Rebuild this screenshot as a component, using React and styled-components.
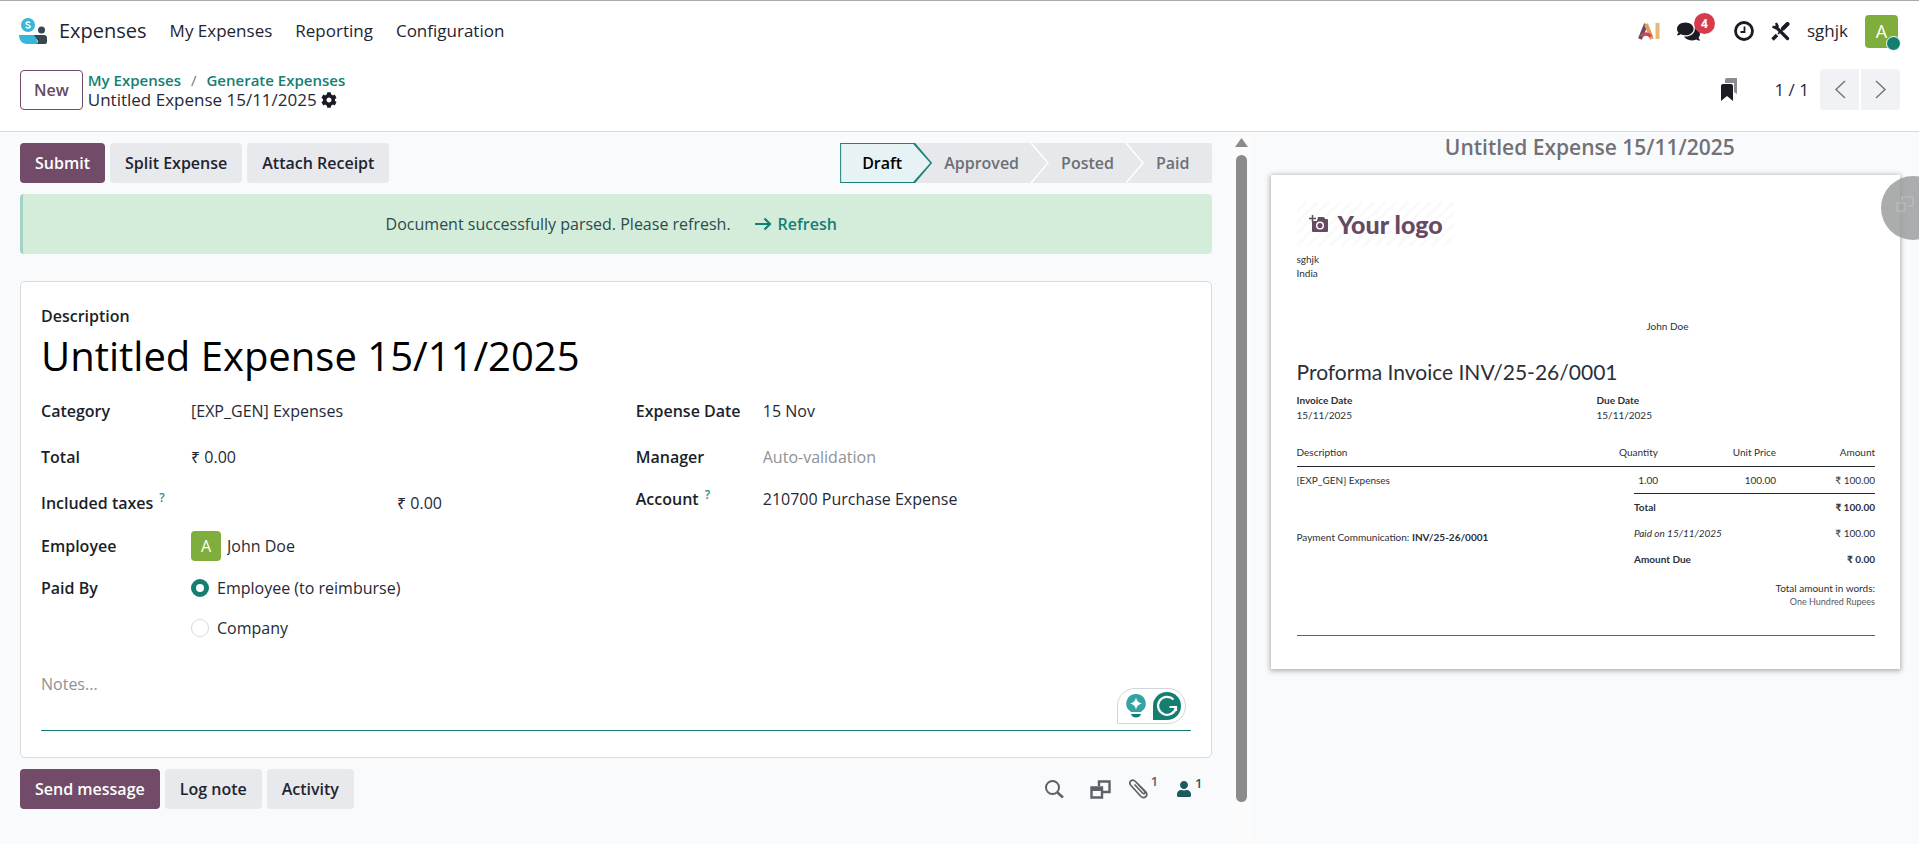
import styled, { createGlobalStyle, css } from "styled-components";
import { FaComments, FaCog, FaUser } from "react-icons/fa";

const GlobalStyle = createGlobalStyle`
  * {
    box-sizing: border-box;
  }
  body {
    margin: 0;
    background: #f9fafc;
    color: #1f2937;
    font-family: "Open Sans", "Noto Sans", sans-serif;
    font-size: 17px;
    line-height: 24px;
    overflow: hidden;
  }
  button, input, textarea {
    font: inherit;
    color: inherit;
  }
`;

const Page = styled.div`
  min-height: 100vh;
  display: flex;
  flex-direction: column;
`;

const Header = styled.header`
  background: #fff;
  border-top: 1px solid #ababab;
  border-bottom: 1px solid #d8dadd;
`;

const Navbar = styled.nav`
  height: 60px;
  padding: 0 21px 0 19px;
  display: flex;
  align-items: center;
  justify-content: space-between;
`;

const NavGroup = styled.div`
  display: flex;
  align-items: center;
  gap: ${(props) => props.$gap}px;
`;

const Brand = styled.a`
  display: flex;
  align-items: center;
  gap: 12px;
  font-size: 20px;
  color: #1f2430;
  text-decoration: none;
`;

const NavLink = styled.a`
  font-size: 17px;
  color: #1f2430;
  text-decoration: none;
`;

const IconButton = styled.button`
  display: flex;
  align-items: center;
  gap: 3px;
  position: relative;
  padding: 0;
  border: 0;
  background: none;
  color: ${(props) => props.$color || "#1b1b26"};
  font-size: 24px;
`;

const CountBadge = styled.span`
  position: absolute;
  left: 17px;
  top: -7px;
  width: 21px;
  height: 21px;
  border-radius: 50%;
  background: #d73b4b;
  color: #fff;
  font-size: 12px;
  font-weight: 700;
  line-height: 21px;
  text-align: center;
`;

const Avatar = styled.span`
  flex: none;
  display: flex;
  align-items: center;
  justify-content: center;
  position: relative;
  width: ${(props) => props.$size}px;
  height: ${(props) => props.$size}px;
  border-radius: 4px;
  background: #7fae3c;
  color: #fff;
  font-size: ${(props) => (props.$size > 30 ? 18 : 16)}px;
`;

const PresenceDot = styled.span`
  position: absolute;
  right: -3px;
  bottom: -3px;
  width: 15px;
  height: 15px;
  border-radius: 50%;
  border: 1px solid #fff;
  background: #147f70;
`;

const ControlPanel = styled.div`
  height: 70px;
  padding: 8px 19px 21px 20px;
  display: flex;
  align-items: center;
  justify-content: space-between;
`;

const Breadcrumb = styled.div`
  display: flex;
  align-items: center;
  gap: 5px;
`;

const NewButton = styled.button`
  height: 40px;
  padding: 0 13px;
  border: 1px solid #714b67;
  border-radius: 4px;
  background: #fff;
  color: #66495f;
  font-size: 16px;
  font-weight: 600;
`;

const Trail = styled.div`
  font-size: 15px;
  font-weight: 600;
  line-height: 20px;
  color: #777;
`;

const TrailLink = styled.a`
  color: #147f73;
  text-decoration: none;
`;

const TrailSlash = styled.span`
  font-weight: 400;
  padding: 0 10px;
`;

const Current = styled.div`
  display: flex;
  align-items: center;
  gap: 4px;
  font-size: 17px;
  line-height: 20px;
`;

const Pager = styled.div`
  display: flex;
  align-items: center;
  font-size: 17px;
`;

const PagerCount = styled.span`
  margin: 0 9px 0 37px;
`;

const PagerButton = styled.button`
  width: 39px;
  height: 41px;
  margin-left: 2px;
  padding: 0;
  display: flex;
  align-items: center;
  justify-content: center;
  border: 0;
  border-radius: ${(props) => (props.$end ? "0 4px 4px 0" : "4px 0 0 4px")};
  background: #f1f2f6;
  color: #777;
`;

const Content = styled.div`
  flex: 1;
  display: grid;
  grid-template-columns: minmax(0, 15fr) minmax(0, 8fr);
`;

const FormArea = styled.div`
  display: flex;
`;

const FormColumn = styled.main`
  flex: 1;
  min-width: 0;
  padding: 11px 20px 16px;
`;

const Track = styled.div`
  width: 20px;
  padding-top: 6px;
  display: flex;
  flex-direction: column;
  align-items: center;
  gap: 8px;
  background: #fbfbfc;
`;

const Thumb = styled.div`
  width: 11px;
  height: 647px;
  border-radius: 6px;
  background: #8b8b8b;
`;

const Bar = styled.div`
  display: flex;
  align-items: center;
  justify-content: space-between;
`;

const Buttons = styled.div`
  display: flex;
  gap: 5px;
`;

const Button = styled.button`
  height: 40px;
  padding: 0 15px;
  border: 0;
  border-radius: 4px;
  background: ${(props) => (props.$primary ? "#714b67" : "#e7e9ed")};
  color: ${(props) => (props.$primary ? "#fff" : "#1f2430")};
  font-size: 16px;
  font-weight: 600;
`;

const Steps = styled.div`
  display: flex;
  height: 40px;
  border-radius: 2px;
  background: #e7e8ec;
`;

const arrowShape = css`
  clip-path: polygon(0 0, calc(100% - 17px) 0, 100% 50%, calc(100% - 17px) 100%, 0 100%);
`;

const Step = styled.button`
  position: relative;
  z-index: 0;
  padding: 0 ${(props) => (props.$last ? 22 : 30)}px 0 ${(props) => (props.$active ? 22 : 12)}px;
  border: 0;
  background: none;
  color: #6d6f76;
  font-size: 16px;
  font-weight: 600;
  ${(props) =>
    props.$active &&
    css`
      color: #000;
      background: #1d8278;
      ${arrowShape}
      &::before {
        content: "";
        position: absolute;
        z-index: -1;
        inset: 1px 2px 1px 1px;
        background: #e6f2f4;
        ${arrowShape}
      }
    `}
`;

const StepChevron = styled.svg`
  position: absolute;
  right: 0;
  top: 0;
`;

const Alert = styled.div`
  display: flex;
  align-items: center;
  justify-content: center;
  gap: 24px;
  height: 60px;
  margin-top: 11px;
  padding-right: 12px;
  border-left: 3px solid #a3d4c4;
  border-radius: 4px;
  background: #d4edda;
  color: #2d4a4c;
  font-size: 16px;
`;

const RefreshButton = styled.button`
  display: flex;
  align-items: center;
  gap: 6px;
  padding: 0;
  border: 0;
  background: none;
  color: #147f78;
  font-weight: 600;
`;

const Sheet = styled.section`
  margin: 27px 0 11px;
  padding: 22px 20px 26px;
  border: 1px solid #d8dadd;
  border-radius: 5px;
  background: #fff;
`;

const Label = styled.label`
  color: #1b1f2b;
  font-size: 16px;
  font-weight: 600;
`;

const TitleInput = styled.input`
  display: block;
  width: 100%;
  height: 54px;
  padding: 0;
  border: 0;
  outline: 0;
  background: none;
  color: #000;
  font-size: 40px;
`;

const Columns = styled.div`
  display: grid;
  grid-template-columns: minmax(0, 1fr) minmax(0, 1fr);
  gap: 40px;
  padding-top: 6px;
`;

const Fields = styled.div`
  display: grid;
  grid-template-columns: ${(props) => props.$label}px minmax(0, 1fr);
  grid-template-rows: ${(props) => props.$rows};
  align-items: center;
`;

const FieldInput = styled.input`
  width: 100%;
  padding: 0;
  border: 0;
  outline: 0;
  background: none;
  font-size: 16px;
  &::placeholder {
    color: #8f9195;
    opacity: 1;
  }
`;

const TaxAmount = styled.output`
  padding-left: 206px;
  font-size: 16px;
`;

const Person = styled.div`
  display: flex;
  align-items: center;
  gap: 6px;
`;

const Help = styled.sup`
  margin-left: 6px;
  color: #2a8f95;
  font-size: 12px;
  font-weight: 600;
  line-height: 12px;
`;

const RadioRow = styled.label`
  grid-column: 2;
  display: flex;
  align-items: center;
  gap: 8px;
  font-size: 16px;
`;

const Radio = styled.input`
  appearance: none;
  width: 18px;
  height: 18px;
  margin: 0;
  border: 1px solid #d8dadd;
  border-radius: 50%;
  background: #fff;
  &:checked {
    border: 5px solid #147f70;
  }
`;

const NotesBox = styled.div`
  position: relative;
  margin-top: 23px;
`;

const Notes = styled.textarea`
  display: block;
  width: 100%;
  height: 61px;
  padding: 2px 0;
  resize: none;
  border: 0;
  border-bottom: 1px solid #147f78;
  outline: 0;
  background: none;
  font-size: 16px;
  &::placeholder {
    color: #8f9195;
    opacity: 1;
  }
`;

const Assistant = styled.div`
  position: absolute;
  right: 5px;
  bottom: 7px;
  display: flex;
  align-items: center;
  gap: 7px;
  height: 36px;
  padding: 0 4px 0 8px;
  border: 1px solid #d3d5dc;
  border-radius: 18px 18px 18px 0;
  background: #fff;
`;

const ChatterTools = styled.div`
  display: flex;
  align-items: center;
  gap: 18px;
  padding-right: 9px;
`;

const SearchButton = styled(IconButton)`
  padding-right: 8px;
`;

const Count = styled.span`
  align-self: flex-start;
  margin-top: -4px;
  font-size: 13px;
  font-weight: 600;
  line-height: 12px;
`;

const Preview = styled.aside`
  padding: 1px 19px 0;
`;

const PreviewTitle = styled.h2`
  margin: 0 0 14px;
  padding-left: 9px;
  color: #717176;
  font-size: 21px;
  font-weight: 600;
  line-height: 28px;
  text-align: center;
`;

const Paper = styled.article`
  padding: 27px 25px 33px 26px;
  background: #fff;
  box-shadow: 0 1px 5px 1px rgba(0, 0, 0, 0.3);
  color: #2b2f38;
  font-family: Lato, "Open Sans", sans-serif;
  font-size: 10px;
  line-height: 14px;
`;

const LogoBox = styled.div`
  display: flex;
  align-items: center;
  gap: 9px;
  width: 157px;
  height: 44px;
  margin-bottom: 6px;
  padding-left: 12px;
  background: repeating-linear-gradient(135deg, #fff 0 5px, #fbfafb 5px 8px);
  color: #664a61;
  font-size: 25px;
  font-weight: 900;
  white-space: nowrap;
`;

const Recipient = styled.div`
  padding: 39px 0 25px 60.5%;
`;

const InvoiceTitle = styled.h3`
  margin: 0;
  font-size: 21px;
  font-weight: 400;
  line-height: 28px;
`;

const Dates = styled.dl`
  display: grid;
  grid-template-columns: 300px 1fr;
  margin: 7px 0 17px;
  dt {
    font-weight: 700;
  }
  dd {
    margin: 1px 0 0;
  }
`;

const Lines = styled.table`
  width: 100%;
  border-collapse: collapse;
  th, td {
    height: 27px;
    padding: 0;
    text-align: right;
    font-weight: 400;
  }
  th:first-child, td:first-child {
    text-align: left;
  }
  thead tr {
    border-bottom: 1px solid #23272f;
  }
`;

const Summary = styled.div`
  display: flex;
  justify-content: space-between;
  padding-bottom: 9px;
`;

const Communication = styled.p`
  margin: 37px 0 0;
`;

const Totals = styled.table`
  width: 241px;
  border-collapse: collapse;
  border-top: 1px solid #23272f;
  th, td {
    height: 26px;
    padding: 0;
    font-weight: 400;
  }
  th {
    text-align: left;
  }
  td {
    text-align: right;
  }
`;

const TotalRow = styled.tr`
  && > * {
    font-weight: ${(props) => (props.$bold ? 700 : 400)};
  }
  th {
    font-style: ${(props) => (props.$italic ? "italic" : "normal")};
  }
`;

const Words = styled.p`
  margin: 0;
  padding-bottom: 26px;
  border-bottom: 1px solid #5f6268;
  text-align: right;
  small {
    display: block;
    color: #555961;
    font-size: 9px;
  }
`;

const FloatingHandle = styled.button`
  position: fixed;
  right: -26px;
  top: 176px;
  width: 64px;
  height: 64px;
  padding: 0 16px 0 0;
  border: 0;
  border-radius: 50%;
  background: rgba(150, 152, 152, 0.8);
  color: #bdbfc1;
`;

const ExpensesLogo = () => (
  <svg width="28" height="26" viewBox="0 0 28 26" aria-hidden="true">
    <circle cx="9" cy="7" r="7" fill="#36b7d7" />
    <path d="M11 5C10.500 3.700 7 3.600 7 5.400C7 7.300 11.200 6.400 11.200 8.500C11.200 10.400 7.300 10.300 6.800 8.800" fill="none" stroke="#fff" strokeWidth="1.500" />
    <circle cx="22.500" cy="12" r="3.500" fill="#37474f" />
    <path d="M0 17h16l3 9H8C3 26 0 22 0 17z" fill="#36b7d7" />
    <path d="M15 17h10q3 0 3 3v4q0 2-2 2h-8c1.500-2 1-3.500-.5-5z" fill="#37474f" />
  </svg>
);

const AiIcon = () => (
  <svg width="22" height="18" viewBox="0 0 22 18" aria-hidden="true">
    <path d="M2 17L8 2" stroke="#6a4660" strokeWidth="4" />
    <path d="M8 2l6 15" stroke="#e0a15f" strokeWidth="4" />
    <path d="M3 14.500q5-5 10 0" fill="none" stroke="#cf4457" strokeWidth="3.500" />
    <path d="M19.500 1v16" stroke="#e8b878" strokeWidth="4" />
  </svg>
);

const ClockIcon = () => (
  <svg width="20" height="20" viewBox="0 0 20 20" fill="none" stroke="currentColor" aria-hidden="true">
    <circle cx="10" cy="10" r="8.500" strokeWidth="2.800" />
    <path d="M10.500 5.500v5.500H6.500" strokeWidth="1.800" />
  </svg>
);

const ToolsIcon = () => (
  <svg width="19" height="19" viewBox="0 0 19 19" fill="none" stroke="currentColor" aria-hidden="true">
    <path d="M5 5l11.500 11.500" strokeWidth="3.200" strokeLinecap="round" />
    <path d="M1.500 4.500l3 1.500 2-2-1.500-3" strokeWidth="2.400" />
    <path d="M16.500 2l-4.500 4.500" strokeWidth="4" strokeLinecap="round" />
    <path d="M11.500 7.500L7 12" strokeWidth="1.600" />
    <path d="M6 13l-4.500 4.500" strokeWidth="3.600" />
  </svg>
);

const BookmarksIcon = () => (
  <svg width="16" height="23" viewBox="0 0 16 23" aria-hidden="true">
    <path d="M6 0h10v16l-3-2V5H4V2q0-2 2-2z" fill="#8c8c90" />
    <path d="M0 8q0-2 2-2h8q2 0 2 2v15l-6-5-6 5z" fill="#1b1b26" />
  </svg>
);

const Chevron = ({ d }) => (
  <svg width="12" height="19" viewBox="0 0 12 19" fill="none" stroke="currentColor" strokeWidth="1.500" aria-hidden="true">
    <path d={d} />
  </svg>
);

const ArrowRight = () => (
  <svg width="17" height="14" viewBox="0 0 17 14" fill="none" stroke="currentColor" strokeWidth="2.200" aria-hidden="true">
    <path d="M0 7h15M9.500 1.500L15 7l-5.500 5.500" />
  </svg>
);

const CameraIcon = () => (
  <svg width="20" height="18" viewBox="0 0 20 18" aria-hidden="true">
    <path d="M3 6v10q0 1 1 1h14q1 0 1-1V5q0-1-1-1h-2l-1-2H9L8 6z" fill="#664a61" />
    <circle cx="11" cy="10.500" r="3.300" fill="#664a61" stroke="#fff" strokeWidth="1.500" />
    <path d="M0 3.500h7M3.500 0v7" stroke="#664a61" strokeWidth="1.500" />
  </svg>
);

const BulbIcon = () => (
  <svg width="20" height="24" viewBox="0 0 20 24" aria-hidden="true">
    <path d="M10 0a9.500 9.500 0 0 1 6 17l-1 1H5l-1-1A9.500 9.500 0 0 1 10 0z" fill="#33a3a6" />
    <path d="M5 20h10q-1 3.500-5 3.500T5 20z" fill="#147f78" />
    <path d="M10 3.500q1 5 6 6-5 1-6 6-1-5-6-6 5-1 6-6z" fill="#fff" />
  </svg>
);

const GrammarIcon = () => (
  <svg width="28" height="28" viewBox="0 0 28 28" aria-hidden="true">
    <path d="M14 0a14 14 0 0 1 0 28H0V14A14 14 0 0 1 14 0z" fill="#147f70" />
    <path d="M20.500 7.500A9 9 0 1 0 23 15h-6.500M23 14.500V19" fill="none" stroke="#fff" strokeWidth="2.200" />
  </svg>
);

const SearchIcon = () => (
  <svg width="19" height="19" viewBox="0 0 19 19" fill="none" stroke="currentColor" strokeWidth="2" aria-hidden="true">
    <circle cx="7.500" cy="7.500" r="6.500" />
    <path d="M12.500 12.500l5.500 5" strokeWidth="2.400" />
  </svg>
);

const WindowsIcon = () => (
  <svg width="21" height="19" viewBox="0 0 21 19" fill="none" stroke="currentColor" strokeWidth="2.400" aria-hidden="true">
    <path d="M9 6V1.500h10.500V12H13" />
    <path d="M1.500 7.500h10.500v10H1.500z" />
    <path d="M1 9h11" strokeWidth="4" />
  </svg>
);

const ClipIcon = () => (
  <svg width="19" height="20" viewBox="0 0 19 20" fill="none" stroke="currentColor" strokeWidth="1.700" strokeLinecap="round" aria-hidden="true">
    <path d="M6 6l7.500 8c1.500 1.600 3.400-.1 2-1.700L6.500 2.500C3-.8-1 3 2 6.500l9.500 10.500c3.500 4 8.500-.5 5-4.500L9 5" />
  </svg>
);

const links = ["My Expenses", "Reporting", "Configuration"];

const totals = [
  { label: "Total", value: "₹ 100.00", bold: true },
  { label: "Paid on 15/11/2025", value: "₹ 100.00", italic: true },
  { label: "Amount Due", value: "₹ 0.00", bold: true },
];

const App = () => {
  return (
    <Page>
      <GlobalStyle />
      <Header>
        <Navbar>
          <NavGroup $gap={23}>
            <Brand href="#expenses">
              <ExpensesLogo />
              Expenses
            </Brand>
            {links.map((link) => (
              <NavLink key={link} href="#menu">
                {link}
              </NavLink>
            ))}
          </NavGroup>
          <NavGroup $gap={17}>
            <IconButton aria-label="AI">
              <AiIcon />
            </IconButton>
            <IconButton aria-label="Messages">
              <FaComments size={23} />
              <CountBadge>4</CountBadge>
            </IconButton>
            <span />
            <IconButton aria-label="Activities">
              <ClockIcon />
            </IconButton>
            <IconButton aria-label="Tools">
              <ToolsIcon />
            </IconButton>
            <NavLink href="#company">sghjk</NavLink>
            <Avatar $size={33}>
              A
              <PresenceDot />
            </Avatar>
          </NavGroup>
        </Navbar>
        <ControlPanel>
          <Breadcrumb>
            <NewButton>New</NewButton>
            <div>
              <Trail>
                <TrailLink href="#my">My Expenses</TrailLink>
                <TrailSlash>/</TrailSlash>
                <TrailLink href="#generate">Generate Expenses</TrailLink>
              </Trail>
              <Current>
                Untitled Expense 15/11/2025
                <IconButton aria-label="Actions">
                  <FaCog size={16} />
                </IconButton>
              </Current>
            </div>
          </Breadcrumb>
          <Pager>
            <IconButton aria-label="Bookmarks">
              <BookmarksIcon />
            </IconButton>
            <PagerCount>1 / 1</PagerCount>
            <PagerButton aria-label="Previous">
              <Chevron d="M11 1L2 9.500l9 8.500" />
            </PagerButton>
            <PagerButton $end aria-label="Next">
              <Chevron d="M1 1l9 8.500L1 18" />
            </PagerButton>
          </Pager>
        </ControlPanel>
      </Header>

      <Content>
        <FormArea>
          <FormColumn>
            <Bar>
              <Buttons>
                <Button $primary>Submit</Button>
                <Button>Split Expense</Button>
                <Button>Attach Receipt</Button>
              </Buttons>
              <Steps>
                <Step $active>Draft</Step>
                {["Approved", "Posted"].map((step) => (
                  <Step key={step}>
                    {step}
                    <StepChevron width="18" height="40" viewBox="0 0 18 40" fill="none" stroke="#fff" strokeWidth="1.500">
                      <path d="M0 0l17 20L0 40" />
                    </StepChevron>
                  </Step>
                ))}
                <Step $last>Paid</Step>
              </Steps>
            </Bar>

            <Alert role="status">
              Document successfully parsed. Please refresh.
              <RefreshButton>
                <ArrowRight />
                Refresh
              </RefreshButton>
            </Alert>

            <Sheet>
              <Label htmlFor="description">Description</Label>
              <TitleInput id="description" defaultValue="Untitled Expense 15/11/2025" />
              <Columns>
                <Fields $label={150} $rows="46px 46px 45px 42px 41px 39px">
                  <Label htmlFor="category">Category</Label>
                  <FieldInput id="category" defaultValue="[EXP_GEN] Expenses" />
                  <Label htmlFor="total">Total</Label>
                  <FieldInput id="total" defaultValue="₹ 0.00" />
                  <Label htmlFor="taxes">
                    Included taxes
                    <Help>?</Help>
                  </Label>
                  <TaxAmount id="taxes">₹ 0.00</TaxAmount>
                  <Label htmlFor="employee">Employee</Label>
                  <Person>
                    <Avatar $size={30}>A</Avatar>
                    <FieldInput id="employee" defaultValue="John Doe" />
                  </Person>
                  <Label as="span">Paid By</Label>
                  <RadioRow>
                    <Radio type="radio" name="paidBy" defaultChecked />
                    Employee (to reimburse)
                  </RadioRow>
                  <RadioRow>
                    <Radio type="radio" name="paidBy" />
                    Company
                  </RadioRow>
                </Fields>
                <Fields $label={127} $rows="46px 46px 38px">
                  <Label htmlFor="date">Expense Date</Label>
                  <FieldInput id="date" defaultValue="15 Nov" />
                  <Label htmlFor="manager">Manager</Label>
                  <FieldInput id="manager" placeholder="Auto-validation" />
                  <Label htmlFor="account">
                    Account
                    <Help>?</Help>
                  </Label>
                  <FieldInput id="account" defaultValue="210700 Purchase Expense" />
                </Fields>
              </Columns>
              <NotesBox>
                <Notes aria-label="Notes" placeholder="Notes..." />
                <Assistant>
                  <BulbIcon />
                  <GrammarIcon />
                </Assistant>
              </NotesBox>
            </Sheet>

            <Bar>
              <Buttons>
                <Button $primary>Send message</Button>
                <Button>Log note</Button>
                <Button>Activity</Button>
              </Buttons>
              <ChatterTools>
                <SearchButton $color="#5f5f68" aria-label="Search">
                  <SearchIcon />
                </SearchButton>
                <IconButton $color="#5f5f68" aria-label="Open in window">
                  <WindowsIcon />
                </IconButton>
                <IconButton $color="#5f5f68" aria-label="Attachments">
                  <ClipIcon />
                  <Count>1</Count>
                </IconButton>
                <IconButton $color="#1d5a60" aria-label="Followers">
                  <FaUser size={16} />
                  <Count>1</Count>
                </IconButton>
              </ChatterTools>
            </Bar>
          </FormColumn>
          <Track>
            <svg width="13" height="9" viewBox="0 0 13 9" aria-hidden="true">
              <path d="M6.500 0L13 9H0z" fill="#8b8b8b" />
            </svg>
            <Thumb />
          </Track>
        </FormArea>

        <Preview>
          <PreviewTitle>Untitled Expense 15/11/2025</PreviewTitle>
          <Paper>
            <LogoBox>
              <CameraIcon />
              Your logo
            </LogoBox>
            <div>sghjk</div>
            <div>India</div>
            <Recipient>John Doe</Recipient>
            <InvoiceTitle>Proforma Invoice INV/25-26/0001</InvoiceTitle>
            <Dates>
              <dt>Invoice Date</dt>
              <dt>Due Date</dt>
              <dd>15/11/2025</dd>
              <dd>15/11/2025</dd>
            </Dates>
            <Lines>
              <colgroup>
                <col />
                <col width="120" />
                <col width="118" />
                <col width="99" />
              </colgroup>
              <thead>
                <tr>
                  <th>Description</th>
                  <th>Quantity</th>
                  <th>Unit Price</th>
                  <th>Amount</th>
                </tr>
              </thead>
              <tbody>
                <tr>
                  <td>[EXP_GEN] Expenses</td>
                  <td>1.00</td>
                  <td>100.00</td>
                  <td>₹ 100.00</td>
                </tr>
              </tbody>
            </Lines>
            <Summary>
              <Communication>
                Payment Communication: <b>INV/25-26/0001</b>
              </Communication>
              <Totals>
                <tbody>
                  {totals.map((row) => (
                    <TotalRow key={row.label} $bold={row.bold} $italic={row.italic}>
                      <th>{row.label}</th>
                      <td>{row.value}</td>
                    </TotalRow>
                  ))}
                </tbody>
              </Totals>
            </Summary>
            <Words>
              Total amount in words:
              <small>One Hundred Rupees</small>
            </Words>
          </Paper>
        </Preview>
      </Content>

      <FloatingHandle aria-label="Open side panel">
        <svg width="18" height="18" viewBox="0 0 18 18" fill="none" stroke="currentColor" aria-hidden="true">
          <path d="M6 5V1h11v9h-5M1 7h8v8H1z" />
        </svg>
      </FloatingHandle>
    </Page>
  );
};

export default App;
